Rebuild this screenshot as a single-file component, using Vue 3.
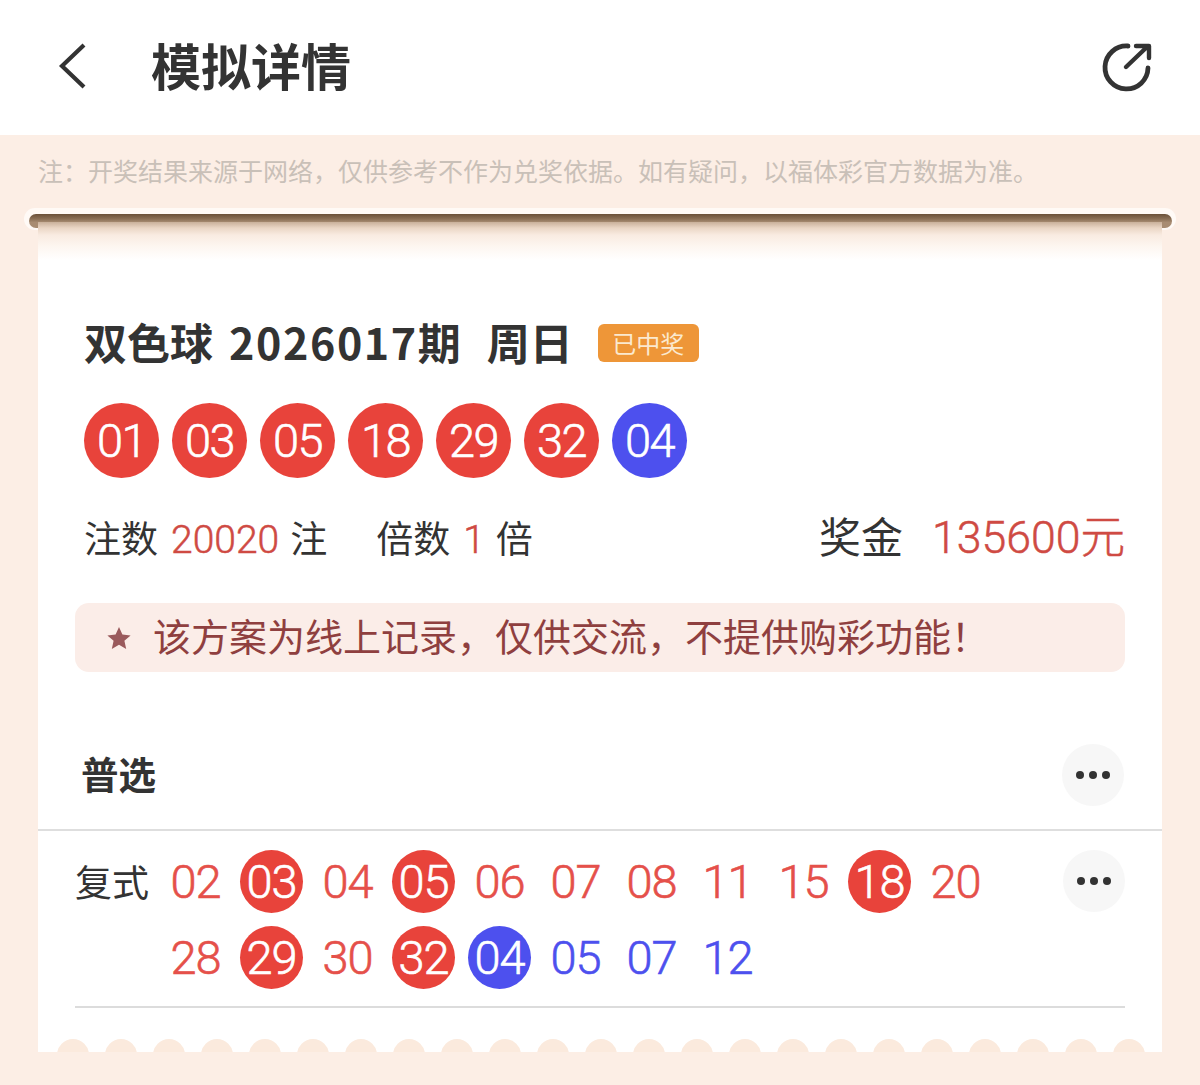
<script setup>
const balls = ['01', '03', '05', '18', '29', '32']
const rowOne = [
  { n: '02' }, { n: '03', hit: 'red' }, { n: '04' }, { n: '05', hit: 'red' }, { n: '06' }, { n: '07' },
  { n: '08' }, { n: '11' }, { n: '15' }, { n: '18', hit: 'red' }, { n: '20' }
]
const rowTwo = [
  { n: '28' }, { n: '29', hit: 'red' }, { n: '30' }, { n: '32', hit: 'red' }, { n: '04', hit: 'blue' },
  { n: '05', blue: true }, { n: '07', blue: true }, { n: '12', blue: true }
]
const scallops = Array.from({ length: 23 })
</script>

<template>
  <div class="page">
    <header class="top">
      <svg class="back" width="30" height="48" viewBox="0 0 30 48"><path d="M26 3 L4 24 L26 45" fill="none" stroke="#333" stroke-width="4.2" /></svg>
      <h1>模拟详情</h1>
      <svg class="share" width="50" height="50" viewBox="0 0 50 50">
        <path d="M26 4 A21.5 21.5 0 1 0 46 26" fill="none" stroke="#333" stroke-width="4.8" stroke-linecap="round" />
        <path d="M24 25 L46 4 M34 4 H47 V16" fill="none" stroke="#333" stroke-width="4.4" stroke-linecap="round" stroke-linejoin="round" />
      </svg>
    </header>
    <p class="note">注：开奖结果来源于网络，仅供参考不作为兑奖依据。如有疑问，以福体彩官方数据为准。</p>
    <div class="rod"><div class="rod-in"></div></div>
    <main class="card">
      <div class="title-row">
        <h2>双色球<span class="issue">2026017</span>期<span class="weekday">周日</span></h2>
        <span class="badge">已中奖</span>
      </div>
      <div class="balls">
        <span v-for="b in balls" :key="b" class="ball">{{ b }}</span>
        <span class="ball blue">04</span>
      </div>
      <div class="stats">
        <div class="left">
          <span>注数<em>20020</em>注</span>
          <span>倍数<em>1</em>倍</span>
        </div>
        <div class="prize"><span class="prize-label">奖金</span><em>135600元</em></div>
      </div>
      <div class="notice">
        <svg width="26" height="24" viewBox="0 0 26 24"><path d="M13 1 L16.4 8.6 L24.6 9.4 L18.4 14.8 L20.2 23 L13 18.7 L5.8 23 L7.6 14.8 L1.4 9.4 L9.6 8.6 Z" fill="#9a5a5c" /></svg>
        <span>该方案为线上记录，仅供交流，不提供购彩功能！</span>
      </div>
      <div class="section">
        <strong>普选</strong>
        <span class="more"><i></i><i></i><i></i></span>
      </div>
      <div class="plan">
        <span class="plan-type">复式</span>
        <div class="plan-rows">
          <div class="nums">
            <span v-for="(x, i) in rowOne" :key="i" class="num" :class="x.hit && 'hit-' + x.hit">{{ x.n }}</span>
          </div>
          <div class="nums">
            <span v-for="(x, i) in rowTwo" :key="i" class="num" :class="[x.hit && 'hit-' + x.hit, x.blue && 'num-blue']">{{ x.n }}</span>
          </div>
        </div>
        <span class="more plan-more"><i></i><i></i><i></i></span>
      </div>
      <div class="end-rule"></div>
      <div class="scallops"><span v-for="(s, i) in scallops" :key="i"></span></div>
    </main>
  </div>
</template>

<style>
html, body { margin: 0; background: #fceee5; }
</style>

<style scoped>
.page {
  width: 1200px;
  height: 1085px;
  display: flex;
  flex-direction: column;
  background: #fceee5;
  font-family: "Noto Sans CJK SC", "Noto Sans", sans-serif;
  color: #333;
  overflow: hidden;
}
.top {
  height: 135px;
  flex: none;
  box-sizing: border-box;
  background: #fff;
  display: flex;
  align-items: center;
  padding: 0 48px 4px 58px;
}
.top h1 {
  margin: 0 0 4px 63px;
  font-size: 50px;
  line-height: 60px;
  font-weight: 700;
  flex: 1;
  color: #333;
}
.share { margin-top: 2px; }
.note {
  margin: 0;
  height: 73px;
  flex: none;
  box-sizing: border-box;
  padding: 18px 0 0 38px;
  font-size: 25px;
  line-height: 34px;
  color: #c9c0b8;
  white-space: nowrap;
}
.rod {
  flex: none;
  height: 22px;
  margin: 0 24px;
  box-sizing: border-box;
  padding: 6px 4px 2px 5px;
  background: #fffaf6;
  border-radius: 11px;
  position: relative;
  z-index: 1;
}
.rod-in {
  height: 14px;
  border-radius: 7px;
  background: linear-gradient(#6a5038 0, #8a6f55 35%, #a88c72 60%, #a88c72 100%);
}
.card {
  flex: none;
  height: 830px;
  margin: -8px 38px 0;
  box-sizing: border-box;
  padding: 0 37px;
  background: linear-gradient(#c9b09a 0, #ead6c5 6px, #f9ebe1 13px, #fdf6f0 24px, #fff 38px);
  display: flex;
  flex-direction: column;
  position: relative;
  z-index: 2;
}
.title-row {
  display: flex;
  align-items: center;
  margin: 94px 0 0 9px;
  height: 50px;
}
h2 {
  margin: 0;
  font-size: 43px;
  line-height: 50px;
  font-weight: 700;
  white-space: nowrap;
  color: #333;
}
.issue {
  margin-left: 16px;
  letter-spacing: 1.6px;
}
.weekday { margin-left: 26px; }
.badge {
  margin: 3px 0 0 25px;
  width: 101px;
  height: 38px;
  border-radius: 6px;
  background: #ee9638;
  color: #fbe9cf;
  font-size: 24px;
  line-height: 38px;
  text-align: center;
}
.balls {
  display: flex;
  gap: 13px;
  margin: 37px 0 0 9px;
}
.ball {
  width: 75px;
  height: 75px;
  border-radius: 50%;
  background: #e8433b;
  color: #fff;
  font-family: Roboto, sans-serif;
  font-weight: 300;
  -webkit-text-stroke: 0.6px currentColor;
  font-size: 47px;
  letter-spacing: -1.5px;
  line-height: 75px;
  text-align: center;
}
.ball.blue { background: #4d50ee; }
.stats {
  display: flex;
  justify-content: space-between;
  align-items: center;
  margin: 35px 0 0 9px;
  height: 50px;
}
.left {
  display: flex;
  gap: 49px;
  font-size: 37px;
  line-height: 50px;
}
.left em { margin: 0 11px 0 13px; font-size: 39px; font-weight: 300; -webkit-text-stroke: 0.5px currentColor; }
em {
  font-style: normal;
  color: #cf4a43;
  font-family: Roboto, "Noto Sans CJK SC", sans-serif;
}
.prize {
  font-size: 42px;
  line-height: 50px;
  display: flex;
  gap: 29px;
}
.prize-label { position: relative; top: -3px; }
.prize em { font-size: 44.6px; font-weight: 300; -webkit-text-stroke: 0.5px currentColor; position: relative; }
.notice {
  margin-top: 40px;
  height: 69px;
  border-radius: 14px;
  background: #fbede8;
  color: #8f3f3f;
  font-size: 38px;
  line-height: 62px;
  display: flex;
  align-items: center;
  padding: 0 0 0 31px;
  gap: 21px;
  white-space: nowrap;
}
.notice span { margin-bottom: 6px; }
.section {
  display: flex;
  align-items: center;
  justify-content: space-between;
  height: 159px;
  margin: 0 -37px;
  padding: 48px 38px 0 43px;
  box-sizing: border-box;
  border-bottom: 2px solid #dedede;
  font-size: 37.5px;
}
.section strong { font-weight: 700; color: #333; margin-bottom: 4px; }
.more {
  width: 62px;
  height: 62px;
  border-radius: 50%;
  background: #f7f7f7;
  display: inline-flex;
  align-items: center;
  justify-content: center;
  gap: 5px;
  flex: none;
}
.more i {
  width: 8px;
  height: 8px;
  border-radius: 50%;
  background: #333;
}
.plan {
  display: flex;
  align-items: flex-start;
  height: 177px;
  padding-top: 20px;
  box-sizing: border-box;
  border-bottom: 2px solid #dcdcdc;
}
.plan-type {
  font-size: 37px;
  line-height: 60px;
  width: 89px;
  flex: none;
  color: #333;
}
.plan-rows {
  flex: 1;
  display: flex;
  flex-direction: column;
  gap: 12px;
}
.nums {
  display: flex;
  gap: 13px;
}
.num {
  width: 63px;
  height: 63px;
  margin-top: -1px;
  margin-bottom: 2px;
  border-radius: 50%;
  font-family: Roboto, sans-serif;
  font-weight: 300;
  -webkit-text-stroke: 0.6px currentColor;
  font-size: 47px;
  letter-spacing: -1px;
  line-height: 63px;
  text-align: center;
  color: #e5504a;
  flex: none;
}
.num-blue { color: #4d50ee; }
.hit-red { background: #e8433b; color: #fff; }
.hit-blue { background: #4d50ee; color: #fff; }
.plan-more { margin: -1px 0 0 auto; }
.end-rule { flex: 1; }
.scallops {
  margin: 0 -37px;
  height: 13px;
  display: flex;
  gap: 16px;
  padding-left: 19px;
  overflow: hidden;
}
.scallops span {
  flex: none;
  width: 32px;
  height: 32px;
  border-radius: 50%;
  background: #fbeadd;
}
</style>
